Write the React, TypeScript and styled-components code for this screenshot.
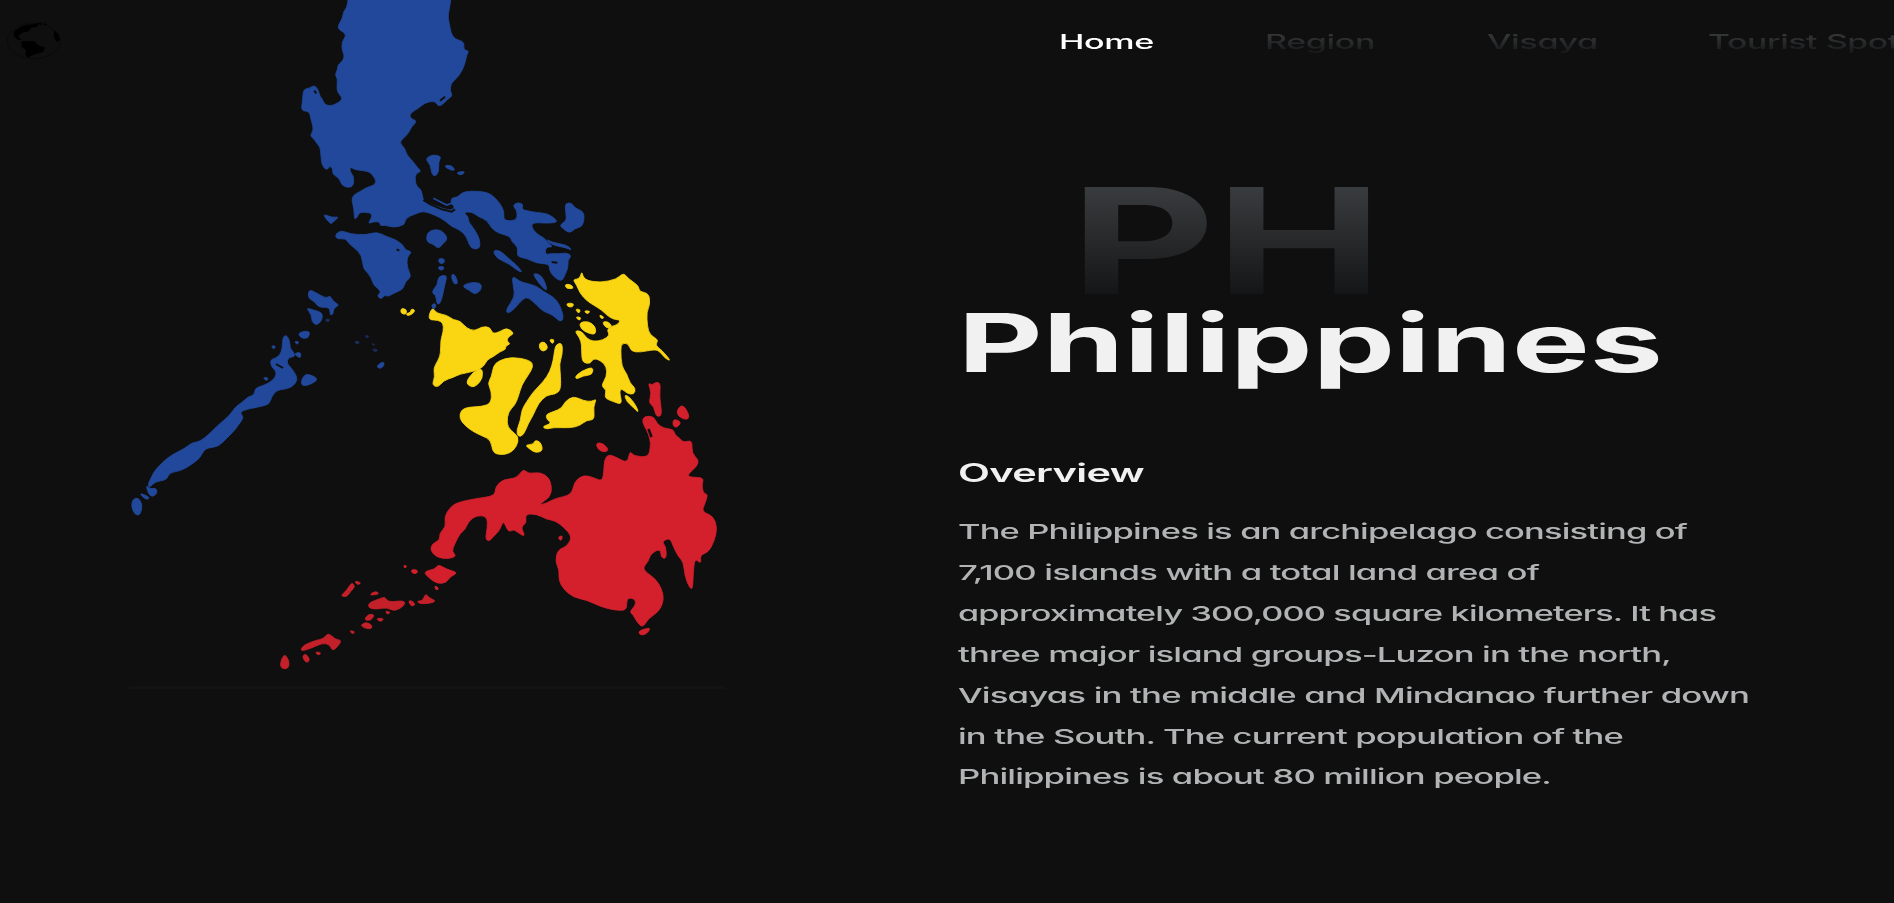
import React, { useLayoutEffect, useRef, useState } from "react";
import styled, { createGlobalStyle, css } from "styled-components";

const GlobalStyle = createGlobalStyle`
  * { box-sizing: border-box; }
  html, body { margin: 0; background: #0f0f0f; overflow: hidden; }
  body { font-family: Inter, "Open Sans", sans-serif; font-feature-settings: "cv11" 1; }
`;

const Page = styled.div`
  width: 100vw;
  height: 100vh;
  overflow: hidden;
  background: #0f0f0f;
`;

const Header = styled.header`
  position: fixed;
  inset: 0 0 auto 0;
  height: 84px;
  display: flex;
  align-items: center;
  overflow: hidden;
`;

const Logo = styled.svg`
  flex: none;
  width: 56px;
  height: 38px;
  margin: 0 0 2px 6px;
`;

const Nav = styled.nav`
  display: flex;
  flex: none;
  margin-left: 997px;
`;

const fadeText = css`
  color: transparent;
  background: linear-gradient(#333536 25%, #17181a 90%);
  background-clip: text;
  -webkit-background-clip: text;
`;

const NavLink = styled.a<{ $active?: boolean; $space: number }>`
  flex: none;
  margin-right: ${(p) => p.$space}px;
  font-size: 19.5px;
  line-height: 28px;
  font-weight: 500;
  letter-spacing: -0.2px;
  color: #fff;
  text-decoration: none;
  span { ${(p) => !p.$active && fadeText} }
`;

const Main = styled.main`
  display: grid;
  grid-template-columns: 958px 1fr;
  height: 100%;
`;

const MapPanel = styled.section`
  display: flex;
  flex-direction: column;
`;

const MapArt = styled.svg`
  display: block;
  width: 800px;
  height: 686px;
`;

const Divider = styled.hr`
  width: 596px;
  height: 3px;
  margin: 0 0 0 129px;
  border: 0;
  background: #111413;
`;

const Info = styled.section`
  padding-top: 184px;
`;

const Code = styled.div`
  height: 114px;
  margin-left: 112px;
  font-size: 147px;
  line-height: 114px;
  font-weight: 700;
  span {
    color: transparent;
    background: linear-gradient(#3a3d3f, #131415);
    background-clip: text;
    -webkit-background-clip: text;
  }
`;

const Title = styled.h1`
  margin: 0 0 65px;
  font-size: 81px;
  line-height: 90px;
  font-weight: 700;
  color: #f1f1f1;
`;

const Subtitle = styled.h2`
  margin: 0 0 19px;
  font-size: 25px;
  line-height: 40px;
  font-weight: 600;
  letter-spacing: -0.4px;
  color: #f1f1f1;
`;

const Copy = styled.p`
  margin: 0;
  font-size: 20.4px;
  line-height: 40.9px;
  font-weight: 450;
  letter-spacing: -0.5px;
  color: #b1b3b4;
`;

const Slot = styled.span<{ $width: number }>`
  display: block;
  width: ${(p) => p.$width}px;
  white-space: nowrap;
`;

const Stretch = styled.span`
  display: inline-block;
  vertical-align: top;
  transform-origin: 0 50%;
`;

function WideText({ width, children }: { width: number; children: string }) {
  const ref = useRef<HTMLSpanElement>(null);
  const [scale, setScale] = useState(1);
  useLayoutEffect(() => {
    if (ref.current) setScale(width / parseFloat(getComputedStyle(ref.current).width));
  }, [width, children]);
  return (
    <Slot $width={width}>
      <Stretch ref={ref} style={{ transform: `scaleX(${scale})` }}>{children}</Stretch>
    </Slot>
  );
}

const links = [
  { label: "Home", width: 95, space: 111, active: true },
  { label: "Region", width: 110, space: 112 },
  { label: "Visaya", width: 111, space: 110 },
  { label: "Tourist Spot", width: 191, space: 0 },
];

const overview = [
  { text: "The Philippines is an archipelago consisting of", width: 729 },
  { text: "7,100 islands with a total land area of", width: 581 },
  { text: "approximately 300,000 square kilometers. It has", width: 758 },
  { text: "three major island groups-Luzon in the north,", width: 713 },
  { text: "Visayas in the middle and Mindanao further down", width: 791 },
  { text: "in the South. The current population of the", width: 665 },
  { text: "Philippines is about 80 million people.", width: 593 },
];

const luzon = [
  "235,-15 235,-5 230,25 220,35 218,55 203,78 208,90 222,97 228,108 216,125 216,150 223,165 220,182 203,195 203,208 195,225 203,235 200,270 208,283 217,295 210,305 195,313 180,318 163,313 158,298 150,290 145,270 133,255 118,265 100,268 98,300 93,333 118,333 122,355 128,375 130,392 120,407 133,418 140,430 150,440 153,465 155,495 170,512 180,497 188,505 188,522 200,530 210,540 215,555 232,563 250,559 252,530 240,515 240,500 255,510 295,513 308,525 320,545 310,557 290,562 270,575 250,585 245,600 252,625 253,660 263,650 268,637 300,637 308,648 293,672 310,665 330,665 330,678 345,675 370,683 405,675 405,655 440,640 460,633 495,645 525,662 545,680 570,690 590,710 597,735 610,748 630,745 630,720 615,690 595,665 595,650 580,637 605,635 625,650 650,660 665,685 685,700 720,708 725,725 745,742 740,770 770,775 800,790 838,792 838,810 850,830 875,845 885,825 895,800 893,780 905,768 890,758 865,762 845,760 825,765 828,740 850,742 832,725 820,712 800,702 783,680 790,667 830,670 862,667 855,655 830,640 800,638 770,632 755,628 760,612 742,607 728,617 740,630 742,650 735,662 700,662 703,635 690,610 665,583 640,575 600,573 575,578 563,592 545,593 542,610 555,620 545,632 515,625 480,610 460,605 455,570 440,560 435,540 437,520 455,515 440,500 430,485 410,465 405,445 388,428 400,415 415,400 425,380 442,363 420,355 420,340 445,325 465,308 495,302 505,320 520,312 530,300 548,288 540,272 543,250 560,235 575,215 585,190 590,165 597,152 580,150 583,125 555,118 543,100 538,70 533,50 543,0 542,-15",
  "465,476 490,463 515,470 505,485 507,515 495,530 485,522 482,495",
  "520,497 545,495 556,512 540,510",
  "556,518 587,513 575,527",
  "885,610 905,608 915,625 937,632 944,650 937,680 915,685 900,700 880,687 868,675 890,662 887,635",
  "156,640 185,653 208,650 190,665 182,674",
  "195,703 215,691 240,702 290,705 320,695 350,710 375,718 400,735 405,750 427,755 410,772 412,805 425,830 405,845 400,868 370,880 355,890 342,885 335,898 320,888 335,875 310,855 305,835 290,815 280,805 275,765 255,745 235,730 228,715 200,718",
  "470,700 490,688 515,691 535,715 520,730 505,747 490,732 470,727",
  "506,774 525,777 521,792 506,789",
  "505,799 523,800 519,811 506,809",
  "505,828 532,825 525,850 518,887 510,912 500,912 498,885 486,880 492,865 502,855",
  "485,913 499,910 495,928 487,924",
  "543,823 555,823 565,852 550,852",
  "574,858 605,846 634,850 634,870 615,884 600,872",
  "668,751 690,751 715,775 740,795 759,819 740,810 715,790 680,775",
  "788,820 810,823 825,845 832,874 815,860 800,840",
  "726,826 750,845 770,850 800,858 820,875 850,890 870,915 882,955 870,967 850,945 820,935 800,915 775,892 760,895 735,925 713,942 708,928 735,890 730,860",
  "828,716 845,727 892,735 907,752 885,742 845,735",
  "115,873 125,871 150,885 170,895 180,886 190,905 209,915 190,925 190,942 180,947 180,922 145,922 135,905 115,895",
  "108,923 130,930 157,938 157,960 140,977 125,965 125,945",
];

const palawan = [
  "488,173 498,164 509,180 510,205 520,215 526,230 505,232 500,250 515,265 528,285 532,300 520,318 500,327 470,330 455,350 448,373 420,380 370,390 360,400 372,412 355,435 345,450 320,475 295,500 265,503 250,512 240,535 205,560 180,573 148,578 140,600 105,605 90,622 83,615 95,590 105,570 140,535 170,517 195,505 215,488 240,485 270,460 300,430 325,410 340,390 350,378 365,368 385,350 403,345 405,325 425,318 445,310 465,295 470,275 455,262 450,240 465,235 480,225 487,205",
  "533,158 570,151 566,175 543,175",
  "543,307 550,288 565,281 596,297 575,312 548,319",
  "78,614 92,628 107,623 113,638 97,652 84,640",
  "38,658 55,652 68,675 60,707 44,703 34,680",
  "58,638 90,652 82,659 70,653",
  "768,258 792,243 792,258 780,267",
  "523,183 538,185 531,195",
  "522,220 543,216 542,234 532,230",
  "428,292 446,293 440,304",
  "453,197 468,198 461,209",
];

const reefs = [
  "705,184 718,184 717,191 706,191",
  "736,166 746,168 745,174 737,172",
  "755,190 764,193 762,198",
  "757,207 773,208 770,215 760,213",
  "617,116 630,118 626,126 618,124",
];

const visayas = [
  "58,160 68,143 80,160 110,165 130,180 150,182 170,205 195,213 215,200 240,201 248,222 270,215 290,203 314,220 295,230 290,243 302,252 286,258 288,268 270,275 250,290 230,300 222,320 190,335 150,342 130,352 100,362 85,382 66,375 75,350 70,325 85,300 92,280 92,240 100,215 100,190 85,180 57,180",
  "178,350 200,328 217,326 218,355 200,377 185,382 168,370",
  "250,318 265,303 305,290 362,301 370,320 355,345 335,375 325,410 315,435 295,455 290,490 300,510 327,530 320,560 300,580 270,585 248,577 243,540 215,527 190,515 165,497 148,475 153,450 175,441 215,440 243,430 245,395 233,370 245,350",
  "438,253 457,248 457,285 448,310 452,350 452,390 435,403 410,405 385,430 370,465 355,490 340,527 323,530 320,510 332,480 335,450 350,425 370,395 400,365 420,335 430,300 433,275",
  "388,248 405,245 415,265 400,275 388,267",
  "417,238 434,238 428,254",
  "408,463 430,455 455,445 465,425 490,408 520,422 545,425 560,416 550,440 554,480 530,480 510,497 480,504 430,502 410,508 396,500 425,490 410,478",
  "345,555 370,553 375,540 392,546 399,572 378,579 360,568",
  "488,58 510,57 515,32 522,60 570,68 620,58 640,38 655,56 687,78 687,95 717,100 720,135 710,155 712,200 720,225 746,240 735,255 755,270 784,304 765,295 750,275 735,268 690,277 663,274 655,250 635,250 632,270 635,320 650,340 660,370 677,385 672,404 650,400 635,385 628,395 637,434 610,425 583,414 590,390 573,378 590,350 590,320 570,300 550,295 540,312 518,307 515,285 515,255 510,235 493,212 515,213 530,235 550,245 580,240 600,225 590,210 605,198 622,195 632,180 610,178 590,165 575,150 550,135 530,122 510,100 500,75",
  "508,188 535,183 557,200 557,224 535,220 513,207",
  "465,72 484,74 492,86 468,86",
  "470,129 492,130 488,142 472,140",
  "495,147 512,148 507,162",
  "496,170 514,172 508,183",
  "521,152 542,153 532,163",
  "567,163 584,172 574,178",
  "576,186 592,184 608,198 590,207",
  "495,350 515,333 550,320 547,345 520,347 500,358",
  "643,403 660,412 680,440 686,459 670,442 650,425",
  "-27,144 -10,148 -11,164 -28,160",
  "3,146 16,150 8,162 -8,168 -12,160 2,158",
];

const mindanao = [
  "733,138 762,140 770,160 790,175 820,178 825,195 840,205 850,218 877,210 875,250 897,270 890,290 862,314 870,322 912,323 905,345 910,370 924,373 915,400 905,425 940,438 952,475 942,515 925,547 900,555 904,582 885,565 880,600 878,659 868,652 855,620 850,575 835,560 820,530 810,503 785,515 798,530 799,567 783,562 783,542 770,540 750,555 745,575 730,590 735,605 765,625 785,655 792,690 777,725 745,745 728,774 710,755 700,735 688,725 708,705 705,686 683,683 680,700 678,722 640,720 600,709 560,690 520,682 490,657 476,630 478,600 466,575 473,540 500,530 517,500 490,470 465,452 440,448 410,432 375,432 380,460 362,470 377,502 350,485 340,478 325,487 310,450 300,480 280,500 268,514 256,507 262,475 262,440 230,435 205,455 195,480 180,490 165,520 155,545 170,558 145,567 110,562 90,540 98,520 120,510 118,490 138,470 133,440 150,413 170,398 230,385 285,378 286,350 310,328 350,325 370,296 385,312 420,306 447,323 455,350 452,380 415,405 440,400 465,385 515,375 523,335 550,315 580,322 607,335 612,300 613,270 625,253 650,262 682,280 690,242 700,258 745,262 752,230 750,205 740,180 726,155",
  "744,38 755,46 768,36 782,40 778,80 787,137 768,140 762,110 746,98 755,70",
  "848,99 872,144 850,150 826,128",
  "820,146 845,156 830,174 818,167",
  "588,218 610,220 627,240 612,247 593,238",
  "69,605 105,598 115,583 140,598 175,608 150,620 140,637 115,642 90,627",
  "714,786 728,778 753,773 740,792 723,796",
  "473,501 489,496 483,515",
  "103,646 118,655 108,662",
  "34,598 54,600 50,612 35,609",
  "10,585 22,588 14,596",
];

const sulu = [
  "746,428 780,416 795,410 805,427 853,421 855,435 825,455 800,442 770,448 745,444",
  "541,575 548,556 590,540 610,537 625,518 645,538 665,541 655,557 638,574 628,552 605,550 575,564",
  "479,614 492,580 507,600 507,624 488,628",
  "546,588 558,581 571,600 558,610",
  "719,498 738,485 759,498 750,509",
  "732,480 745,462 765,464 752,482",
  "767,475 793,475 782,487",
  "661,407 680,392 695,366 706,380 692,394 680,412",
  "703,362 725,368 712,376",
  "745,406 768,392 779,403",
  "864,422 876,422 887,434 874,440",
  "891,422 908,424 916,400 928,414 949,423 930,430 898,432",
  "795,452 813,457 802,464",
  "688,511 706,515 697,523",
  "585,575 605,578 594,587",
];

const regions = [
  { id: "luzon", x: 270, y: 0, fill: "#21489b", shapes: luzon },
  { id: "palawan", x: 120, y: 280, fill: "#21489b", shapes: palawan },
  { id: "reefs", x: 120, y: 280, fill: "#1a2f5e", shapes: reefs },
  { id: "visayas", x: 410, y: 260, fill: "#f9d512", shapes: visayas },
  { id: "mindanao", x: 400, y: 370, fill: "#d4202c", shapes: mindanao },
  { id: "sulu", x: 120, y: 460, fill: "#c4202a", shapes: sulu },
];

// Rounds a closed outline: each vertex becomes the control point between edge midpoints.
function coastline(points: string) {
  const pts = points.split(" ").map((p) => p.split(",").map(Number));
  const mid = (a: number[], b: number[]) => `${(a[0] + b[0]) / 2} ${(a[1] + b[1]) / 2}`;
  const last = pts[pts.length - 1];
  const curves = pts.map((p, i) => `Q${p[0]} ${p[1]} ${mid(p, pts[(i + 1) % pts.length])}`);
  return `M${mid(last, pts[0])} ${curves.join(" ")}Z`;
}

const channels = [
  "M460 600 L480 612 515 628 545 635 555 628",
  "M830 752 L850 745 868 752 895 750",
  "M845 786 L862 788",
  "M380 748 L388 752",
  "M525 290 L510 302",
  "M133 272 L139 280",
];

function PhilippinesMap() {
  return (
    <MapArt viewBox="0 0 800 686" aria-label="Map of the Philippines">
      {regions.map((r) => (
        <g
          key={r.id}
          transform={`translate(${r.x} ${r.y}) scale(0.33333)`}
          fill={r.fill}
          stroke={r.fill}
          strokeWidth="2.5"
          strokeLinejoin="round"
        >
          {r.shapes.map((points) => <path key={points} d={coastline(points)} />)}
        </g>
      ))}
      <g transform="scale(0.33333) translate(810 0)" fill="none" stroke="#0f0f0f" strokeWidth="6">
        {channels.map((d) => <path key={d} d={d} />)}
        <path d="M490 595 L530 615 550 608" stroke="#21489b" strokeWidth="5" />
      </g>
      <path d="M648.5 429 L651.5 437" stroke="#0f0f0f" strokeWidth="2.5" />
      <path d="M276 364 L283 368" stroke="#0f0f0f" strokeWidth="2" />
    </MapArt>
  );
}

export default function App() {
  return (
    <Page>
      <GlobalStyle />
      <Main>
        <MapPanel>
          <PhilippinesMap />
          <Divider />
        </MapPanel>
        <Info>
          <Code><WideText width={313}>PH</WideText></Code>
          <Title><WideText width={705}>Philippines</WideText></Title>
          <Subtitle><WideText width={186}>Overview</WideText></Subtitle>
          <Copy>
            {overview.map((line) => (
              <WideText key={line.text} width={line.width}>{line.text}</WideText>
            ))}
          </Copy>
        </Info>
      </Main>
      <Header>
        <Logo viewBox="0 0 168 114">
          <ellipse cx="83" cy="57" rx="80" ry="53" fill="none" stroke="#0b0b0b" strokeWidth="3" />
          <path d="M24 28 L45 14 65 8 100 4 92 14 75 18 68 28 50 32 36 43 46 53 36 54 23 42Z M47 57 L65 58 85 57 95 68 118 77 110 91 88 96 75 102 66 108 58 98 60 84 47 74Z M143 25 L157 36 162 54 152 60 144 45Z" fill="#000" />
          <path d="M96 6 L105 2 104 10 M112 5 L122 8" fill="none" stroke="#000" strokeWidth="3" />
        </Logo>
        <Nav>
          {links.map((l) => (
            <NavLink key={l.label} $active={l.active} $space={l.space}>
              <WideText width={l.width}>{l.label}</WideText>
            </NavLink>
          ))}
        </Nav>
      </Header>
    </Page>
  );
}
